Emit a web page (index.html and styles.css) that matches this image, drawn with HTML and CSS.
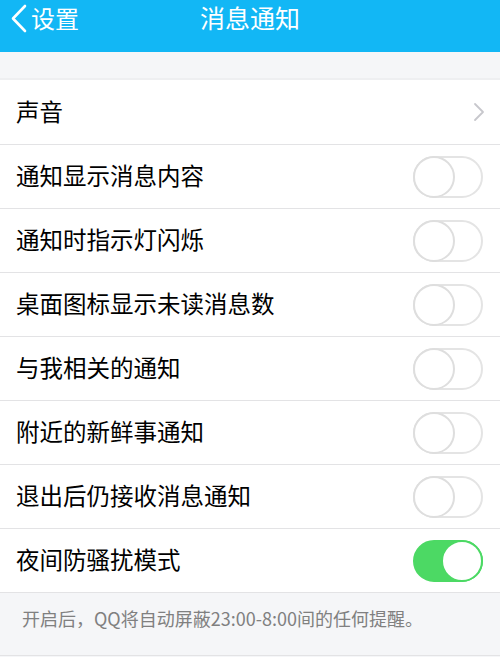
FILE: index.html
```html
<!DOCTYPE html>
<html lang="zh">
<head>
<meta charset="utf-8">
<title>消息通知</title>
<link rel="stylesheet" href="styles.css">
</head>
<body>
<header class="nav">
  <div class="back">
    <svg class="back-icon" width="18" height="30" viewBox="0 0 18 30"><polyline points="15,3 3,15.5 15,28" fill="none" stroke="#fff" stroke-width="2.6" stroke-linecap="round" stroke-linejoin="round"/></svg>
    <span>设置</span>
  </div>
  <h1 class="title">消息通知</h1>
</header>
<div class="gap"></div>
<ul class="list">
  <li class="row"><span class="label">声音</span>
    <svg class="chev" width="12" height="20" viewBox="0 0 12 20"><polyline points="2,2 10,10 2,18" fill="none" stroke="#c7c7cc" stroke-width="1.8" stroke-linecap="round" stroke-linejoin="round"/></svg>
  </li>
  <li class="row"><span class="label">通知显示消息内容</span><span class="toggle"></span></li>
  <li class="row"><span class="label">通知时指示灯闪烁</span><span class="toggle"></span></li>
  <li class="row"><span class="label">桌面图标显示未读消息数</span><span class="toggle"></span></li>
  <li class="row"><span class="label">与我相关的通知</span><span class="toggle"></span></li>
  <li class="row"><span class="label">附近的新鲜事通知</span><span class="toggle"></span></li>
  <li class="row"><span class="label">退出后仍接收消息通知</span><span class="toggle"></span></li>
  <li class="row"><span class="label">夜间防骚扰模式</span><span class="toggle on"></span></li>
</ul>
<div class="note">开启后，QQ将自动屏蔽23:00-8:00间的任何提醒。</div>
</body>
</html>
```

FILE: styles.css
```css
html, body {
  margin: 0;
  padding: 0;
  background: #f5f6f8;
  font-family: "Noto Sans CJK SC", "Noto Sans", sans-serif;
}
.nav {
  height: 52px;
  background: #12b7f5;
  color: #fff;
  position: relative;
  display: flex;
  justify-content: center;
}
.back {
  position: absolute;
  left: 10px;
  top: 3px;
  display: flex;
  align-items: center;
  font-size: 24px;
  line-height: 30px;
}
.back-icon {
  margin-right: 3px;
}
.title {
  margin: 0;
  padding-top: 0;
  font-size: 25px;
  font-weight: normal;
  line-height: 34px;
}
.gap {
  height: 26px;
  border-bottom: 2px solid #eeeff1;
}
.list {
  list-style: none;
  margin: 0;
  padding: 0;
  background: #fff;
}
.row {
  height: 63px;
  border-bottom: 1px solid #e3e3e5;
  display: flex;
  align-items: center;
  justify-content: space-between;
  padding: 0 16px 0 16px;
  font-size: 23.5px;
  color: #000;
}
.label {
  padding-bottom: 3px;
}
.row:first-child {
  height: 64px;
}
.chev {
  margin-right: -1px;
}
.toggle {
  width: 66px;
  height: 38px;
  border: 2px solid #e4e4e4;
  border-radius: 22px;
  background: #fff;
  position: relative;
  margin-right: 1px;
}
.toggle::after {
  content: "";
  position: absolute;
  left: -2px;
  top: -2px;
  width: 38px;
  height: 38px;
  border-radius: 50%;
  border: 2px solid #dedede;
  background: #fff;
}
.toggle.on {
  background: #4cd964;
  border-color: #4cd964;
}
.toggle.on::after {
  left: auto;
  right: -2px;
  border-color: #4cd964;
}
.note {
  padding: 12px 22px 0;
  height: 50px;
  font-size: 18px;
  color: #808080;
  border-bottom: 1px solid #e3e3e5;
}
```
